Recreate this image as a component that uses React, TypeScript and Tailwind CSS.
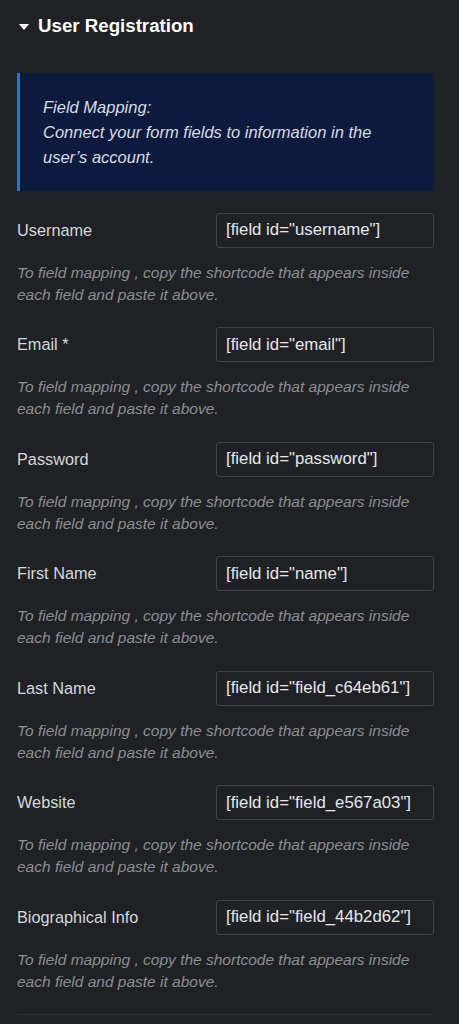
const fields = [
  { label: 'Username', code: '[field id="username"]' },
  { label: 'Email *', code: '[field id="email"]' },
  { label: 'Password', code: '[field id="password"]' },
  { label: 'First Name', code: '[field id="name"]' },
  { label: 'Last Name', code: '[field id="field_c64eb61"]' },
  { label: 'Website', code: '[field id="field_e567a03"]' },
  { label: 'Biographical Info', code: '[field id="field_44b2d62"]' },
]

function FieldRow({ label, code }: { label: string; code: string }) {
  return (
    <div className="pb-[21.5px]">
      <div className="flex items-center">
        <div className="w-[199px] text-[16.3px] text-[#d5d8dc]">{label}</div>
        <div className="flex-1 h-[35px] flex items-center px-[9px] rounded-[3px] border border-[#3f4247] text-[16.8px] text-[#e6e8ea] whitespace-nowrap">
          {code}
        </div>
      </div>
      <p className="mt-[14px] text-[15.5px] leading-[22px] italic text-[#8c8f94]">
        To field mapping , copy the shortcode that appears inside each field and paste it above.
      </p>
    </div>
  )
}

export default function App() {
  return (
    <div className="w-[459px] min-h-[1024px] bg-[#1f2124] pl-[17px] pr-[25px]" style={{ fontFamily: '"Liberation Sans", Arial, sans-serif' }}>
      <div className="h-[52px] flex items-center gap-[9px] pl-[2px]">
        <svg width="10" height="6" viewBox="0 0 10 6" className="mt-[1px]">
          <path d="M0 0 L10 0 L5 6 Z" fill="#ffffff" />
        </svg>
        <span className="text-[18.7px] font-bold text-white">User Registration</span>
      </div>
      <div className="mt-[21px] mb-[21.5px] bg-[#0c1a3e] border-l-[3px] border-[#2f6fe0] rounded-r-[3px] pl-[23px] pr-4 py-[21.5px] text-[16.5px] leading-[25px] italic text-[#d9dce3]">
        <div>Field Mapping:</div>
        <div>Connect your form fields to information in the user’s account.</div>
      </div>
      {fields.map((f) => (
        <FieldRow key={f.label} label={f.label} code={f.code} />
      ))}
      <div className="border-t border-[#2c2f33]" />
    </div>
  )
}
